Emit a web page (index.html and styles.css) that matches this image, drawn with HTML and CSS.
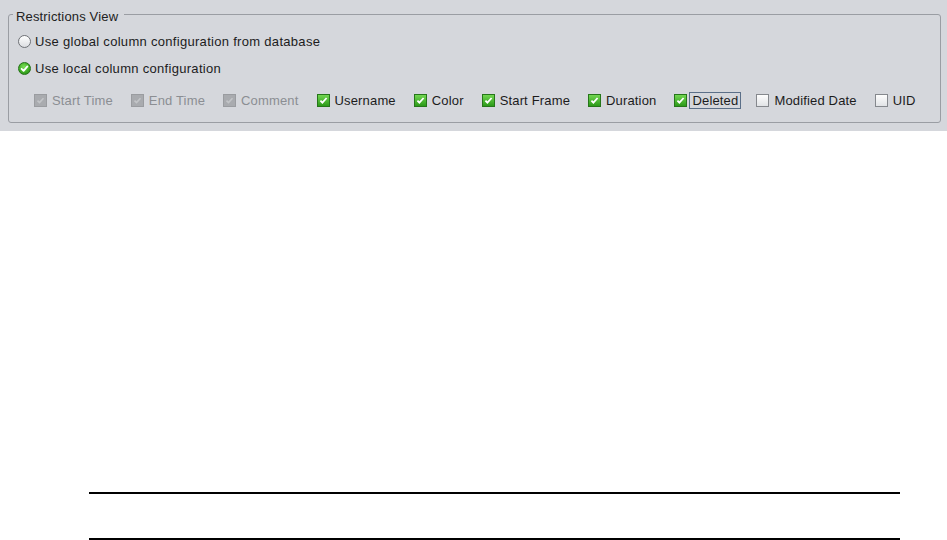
FILE: index.html
```html
<!DOCTYPE html>
<html>
<head>
<meta charset="utf-8">
<title>Restrictions View</title>
<link rel="stylesheet" href="styles.css">
</head>
<body>
<div class="panel">
  <fieldset class="group">
    <legend>Restrictions View</legend>
    <label class="opt">
      <span class="radio"></span>
      <span class="txt">Use global column configuration from database</span>
    </label>
    <label class="opt">
      <span class="radio on"><svg viewBox="0 0 13 13" width="13" height="13"><path d="M3.6 6.8 L5.6 8.8 L9.4 4.4" fill="none" stroke="#fff" stroke-width="1.8" stroke-linecap="round" stroke-linejoin="round"/></svg></span>
      <span class="txt">Use local column configuration</span>
    </label>
    <div class="cols">
      <label class="col dis"><span class="cb dis"><svg viewBox="0 0 11 11" width="11" height="11"><path d="M2.5 5.6 L4.5 7.6 L8.5 3.2" fill="none" stroke="#c3c5c8" stroke-width="1.6"/></svg></span><span class="lbl">Start Time</span></label>
      <label class="col dis"><span class="cb dis"><svg viewBox="0 0 11 11" width="11" height="11"><path d="M2.5 5.6 L4.5 7.6 L8.5 3.2" fill="none" stroke="#c3c5c8" stroke-width="1.6"/></svg></span><span class="lbl">End Time</span></label>
      <label class="col dis"><span class="cb dis"><svg viewBox="0 0 11 11" width="11" height="11"><path d="M2.5 5.6 L4.5 7.6 L8.5 3.2" fill="none" stroke="#c3c5c8" stroke-width="1.6"/></svg></span><span class="lbl">Comment</span></label>
      <label class="col"><span class="cb on"><svg viewBox="0 0 11 11" width="11" height="11"><path d="M2.4 5.6 L4.4 7.6 L8.6 3" fill="none" stroke="#fff" stroke-width="1.8"/></svg></span><span class="lbl">Username</span></label>
      <label class="col"><span class="cb on"><svg viewBox="0 0 11 11" width="11" height="11"><path d="M2.4 5.6 L4.4 7.6 L8.6 3" fill="none" stroke="#fff" stroke-width="1.8"/></svg></span><span class="lbl">Color</span></label>
      <label class="col"><span class="cb on"><svg viewBox="0 0 11 11" width="11" height="11"><path d="M2.4 5.6 L4.4 7.6 L8.6 3" fill="none" stroke="#fff" stroke-width="1.8"/></svg></span><span class="lbl">Start Frame</span></label>
      <label class="col"><span class="cb on"><svg viewBox="0 0 11 11" width="11" height="11"><path d="M2.4 5.6 L4.4 7.6 L8.6 3" fill="none" stroke="#fff" stroke-width="1.8"/></svg></span><span class="lbl">Duration</span></label>
      <label class="col"><span class="cb on"><svg viewBox="0 0 11 11" width="11" height="11"><path d="M2.4 5.6 L4.4 7.6 L8.6 3" fill="none" stroke="#fff" stroke-width="1.8"/></svg></span><span class="lbl focus">Deleted</span></label>
      <label class="col"><span class="cb"></span><span class="lbl">Modified Date</span></label>
      <label class="col"><span class="cb"></span><span class="lbl">UID</span></label>
    </div>
  </fieldset>
</div>
<div class="sheet"></div>
</body>
</html>
```

FILE: styles.css
```css
html, body {
  margin: 0;
  background: #ffffff;
}
body {
  font-family: "Liberation Sans", Arial, sans-serif;
  font-size: 13px;
  letter-spacing: 0.16px;
  color: #1c1c1c;
}
.panel {
  background: #d5d7dc;
  padding: 4px 6px 8px 8px;
}
.group {
  margin: 0;
  min-width: 0;
  border: 1px solid #9a9da3;
  border-radius: 3px;
  padding: 5px 9px 8px 9px;
}
.group legend {
  margin-left: -5px;
  padding: 5px 6px 0 3px;
  line-height: 15px;
  color: #222;
}
.opt {
  display: flex;
  align-items: center;
  gap: 4px;
  height: 27px;
}
.opt:first-of-type {
  margin-top: -1px;
}
.txt {
  line-height: 15px;
  letter-spacing: 0.3px;
}
.radio {
  width: 13px;
  height: 13px;
  box-sizing: border-box;
  border-radius: 50%;
  border: 1px solid #6f7277;
  background: linear-gradient(#ffffff, #dcdee2);
  display: flex;
  align-items: center;
  justify-content: center;
  flex: none;
}
.radio.on {
  border: 1px solid #237016;
  background: radial-gradient(circle at 45% 35%, #7ee05a 0%, #3fae25 55%, #1f7a12 100%);
}
.radio.on svg {
  margin: -1px;
}
.radio svg {
  display: block;
}
.cols {
  display: flex;
  align-items: center;
  height: 27px;
  margin-top: 5px;
  margin-left: 16px;
}
.col {
  display: flex;
  align-items: center;
  margin-right: 15px;
  flex: none;
}
.cb {
  width: 13px;
  height: 13px;
  box-sizing: border-box;
  border: 1px solid #85888d;
  background: linear-gradient(#fdfdfd, #e1e3e6);
  display: flex;
  flex: none;
}
.cb svg {
  display: block;
}
.cb.on {
  border-color: #26761a;
  background: linear-gradient(#72d651, #2c9a19);
}
.cb.dis {
  border-color: #9a9ca0;
  background: #a9abaf;
}
.lbl {
  margin-left: 2px;
  border: 1px solid transparent;
  padding: 0 2px;
  line-height: 15px;
  white-space: nowrap;
}
.lbl.focus {
  border-color: #5b6f88;
}
.col.dis .lbl {
  color: #8b8e93;
}
.sheet {
  margin: 361px 0 0 89px;
  width: 811px;
  height: 44px;
  border-top: 2px solid #000;
  border-bottom: 2px solid #000;
}
```
